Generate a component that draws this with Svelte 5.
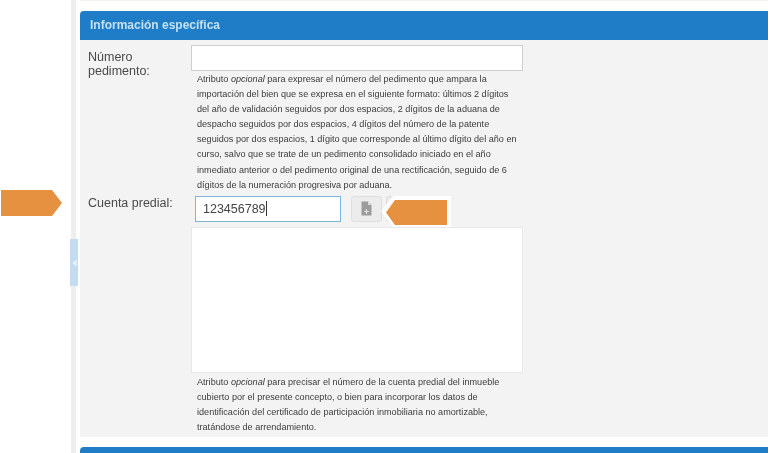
<script lang="ts">
    const pedimentoHelp = [
        'importación del bien que se expresa en el siguiente formato: últimos 2 dígitos',
        'del año de validación seguidos por dos espacios, 2 dígitos de la aduana de',
        'despacho seguidos por dos espacios, 4 dígitos del número de la patente',
        'seguidos por dos espacios, 1 dígito que corresponde al último dígito del año en',
        'curso, salvo que se trate de un pedimento consolidado iniciado en el año',
        'inmediato anterior o del pedimento original de una rectificación, seguido de 6',
        'dígitos de la numeración progresiva por aduana.'
    ];
    const cuentaHelp = [
        'cubierto por el presente concepto, o bien para incorporar los datos de',
        'identificación del certificado de participación inmobiliaria no amortizable,',
        'tratándose de arrendamiento.'
    ];
</script>

<div class="page">
    <aside class="rail">
        <button class="toggle" aria-label="Ocultar menú">
            <svg width="5" height="8" viewBox="0 0 5 8"><path d="M4.5 0.5v7L0.5 4z" fill="#eaf3fa" /></svg>
        </button>
    </aside>

    <main class="content">
        <div class="prev-panel"></div>
        <section class="panel">
            <h2 class="panel-title">Información específica</h2>
            <div class="panel-body">
                <div class="row">
                    <label class="label" for="pedimento">Número pedimento:</label>
                    <div class="field">
                        <input id="pedimento" class="text-input" type="text" />
                        <p class="help">
                            <span>Atributo <em>opcional</em> para expresar el número del pedimento que ampara la</span>
                            {#each pedimentoHelp as line}<span>{line}</span>{/each}
                        </p>
                    </div>
                </div>

                <div class="row predial">
                    <label class="label" for="predial">Cuenta predial:</label>
                    <div class="field">
                        <div class="input-line">
                            <div id="predial" class="focused-input">123456789<i class="caret"></i></div>
                            <button class="file-btn" aria-label="Agregar archivo">
                                <svg width="13" height="15" viewBox="0 0 13 15">
                                    <path d="M1.5 0.5h6.5l3.5 3.5v10.5h-10z" fill="#9c9c9c" />
                                    <path d="M8 0.5l3.5 3.5h-3.5z" fill="#dcdcdc" />
                                    <path d="M6.5 8v5M4 10.5h5" stroke="#e2e2e2" stroke-width="1.2" />
                                </svg>
                            </button>
                            <button class="file-btn hidden-btn" aria-label="Quitar archivo"></button>
                        </div>
                        <textarea class="text-area" aria-label="Datos de la cuenta predial"></textarea>
                        <p class="help help-tight">
                            <span>Atributo <em>opcional</em> para precisar el número de la cuenta predial del inmueble</span>
                            {#each cuentaHelp as line}<span>{line}</span>{/each}
                        </p>
                    </div>
                </div>
            </div>
        </section>
        <div class="next-panel"></div>
    </main>

    <div class="arrow arrow-left"></div>
    <div class="arrow-right-wrap"><div class="arrow arrow-right"></div></div>
</div>

<style>
    :global(body) {
        margin: 0;
        background: #fff;
    }

    .page {
        position: relative;
        display: flex;
        width: 768px;
        height: 453px;
        overflow: hidden;
        background: #fff;
        font-family: "Liberation Sans", Arial, sans-serif;
        color: #3a3a3a;
        filter: blur(0.55px);
    }

    .rail {
        position: relative;
        flex: none;
        width: 5px;
        margin-left: 71px;
        background: #eeeeee;
    }

    .toggle {
        position: absolute;
        top: 239px;
        left: -1px;
        display: flex;
        align-items: center;
        justify-content: center;
        width: 8px;
        height: 47px;
        padding: 0;
        border: 0;
        background: #c4dcef;
    }

    .content {
        flex: 1;
        min-width: 0;
        margin-left: 4px;
    }

    .prev-panel {
        height: 1px;
        margin-bottom: 10px;
        background: #f5f3f0;
    }

    .panel {
        background: #f3f3f3;
    }

    .panel-title {
        margin: 0;
        height: 29px;
        padding-left: 10px;
        border-radius: 4px 0 0 0;
        background: #1e7dc6;
        color: #c3e0f4;
        font-size: 12px;
        font-weight: 700;
        line-height: 29px;
    }

    .panel-body {
        height: 397px;
        padding: 5px 0 0 8px;
        box-sizing: border-box;
    }

    .row {
        display: grid;
        grid-template-columns: 103px 332px;
    }

    .predial {
        margin-top: 3px;
    }

    .label {
        padding-top: 5px;
        width: 76px;
        font-size: 12.5px;
        line-height: 14px;
        color: #4a4a4a;
    }

    .predial .label {
        width: auto;
        padding-top: 0;
        white-space: nowrap;
    }

    .text-input {
        display: block;
        width: 100%;
        height: 26px;
        box-sizing: border-box;
        border: 1px solid #cfcfcf;
        background: #fff;
    }

    .help {
        margin: 0;
        padding: 1px 0 0 6px;
        font-size: 9.1px;
        line-height: 15.1px;
        color: #3c3c3c;
        white-space: nowrap;
    }

    .help-tight {
        padding-top: 2px;
        line-height: 15px;
    }

    .help span {
        display: block;
    }

    .input-line {
        display: flex;
        align-items: flex-start;
        gap: 10px;
        padding-left: 4px;
    }

    .focused-input {
        display: flex;
        align-items: center;
        width: 146px;
        height: 26px;
        box-sizing: border-box;
        padding-left: 7px;
        border: 1px solid #7fb5d6;
        background: #fff;
        font-size: 12.5px;
        color: #444;
    }

    .caret {
        width: 1px;
        height: 15px;
        background: #333;
    }

    .file-btn {
        flex: none;
        width: 31px;
        height: 26px;
        padding: 0;
        display: flex;
        align-items: center;
        justify-content: center;
        border: 1px solid #dedede;
        border-radius: 3px;
        background: #ececec;
    }

    .hidden-btn {
        margin-left: -6px;
    }

    .text-area {
        display: block;
        width: 100%;
        height: 146px;
        margin-top: 5px;
        box-sizing: border-box;
        border: 1px solid #e9e9e9;
        background: #fff;
        resize: none;
    }

    .next-panel {
        height: 10px;
        margin-top: 10px;
        border-radius: 4px 0 0 0;
        background: #1e7dc6;
    }

    .arrow {
        background: #e5913f;
    }

    .arrow-left {
        position: absolute;
        top: 190px;
        left: 1px;
        width: 61px;
        height: 26px;
        clip-path: polygon(0 0, 51px 0, 100% 50%, 51px 100%, 0 100%);
    }

    .arrow-right-wrap {
        position: absolute;
        top: 196px;
        left: 381px;
        width: 70px;
        height: 31px;
        background: #fff;
        clip-path: polygon(12px 0, 100% 0, 100% 100%, 12px 100%, 0 50%);
    }

    .arrow-right {
        position: absolute;
        top: 4px;
        left: 5px;
        width: 61px;
        height: 25px;
        clip-path: polygon(9px 0, 100% 0, 100% 100%, 9px 100%, 0 50%);
    }
</style>
